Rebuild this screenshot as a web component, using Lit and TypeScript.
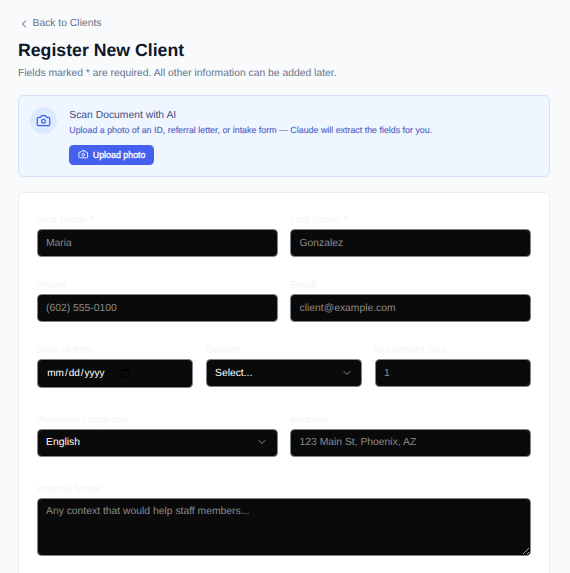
import { LitElement, html, css, svg } from "lit";
import { customElement } from "lit/decorators.js";

const camera = (size: number) => html`<svg width=${size} height=${size} viewBox="0 0 24 24" fill="none" stroke="currentColor" stroke-width="2" stroke-linecap="round" stroke-linejoin="round">${svg`<path d="M14.5 4h-5L7 7H4a2 2 0 0 0-2 2v9a2 2 0 0 0 2 2h16a2 2 0 0 0 2-2V9a2 2 0 0 0-2-2h-3l-2.5-3z"/><circle cx="12" cy="13" r="3"/>`}</svg>`;
const chevronDown = html`<svg class="chev" width="12" height="12" viewBox="0 0 24 24" fill="none" stroke="currentColor" stroke-width="2" stroke-linecap="round" stroke-linejoin="round">${svg`<path d="m6 9 6 6 6-6"/>`}</svg>`;

@customElement("app-root")
export class AppRoot extends LitElement {
  static styles = css`
    :host {
      display: block;
      height: 573px;
      overflow: hidden;
      background: #f8fafc;
      font-family: "Liberation Sans", Arial, sans-serif;
      text-rendering: geometricPrecision;
      box-sizing: border-box;
      padding: 15.5px 20px 0 18px;
    }
    * { box-sizing: border-box; }
    .back {
      display: flex;
      align-items: center;
      gap: 2.5px;
      font-size: 10.35px;
      line-height: 16px;
      color: #64748b;
    }
    .back svg { display: block; color: #475569; }
    h1 {
      margin: 6.5px 0 0;
      font-size: 17.7px;
      line-height: 24px;
      font-weight: 700;
      color: #0f172a;
    }
    .sub {
      margin: 3.5px 0 13.5px;
      font-size: 10.35px;
      line-height: 16px;
      color: #64748b;
    }
    .banner {
      display: flex;
      gap: 12px;
      padding: 11.25px;
      background: #eff6ff;
      border: 0.75px solid #d3e0f5;
      border-radius: 6px;
      margin-bottom: 15px;
    }
    .circle {
      flex: none;
      width: 27px;
      height: 27px;
      border-radius: 50%;
      background: #dbeafe;
      color: #4361ee;
      display: flex;
      align-items: center;
      justify-content: center;
    }
    .title {
      margin-top: 1px;
      font-size: 10.35px;
      line-height: 15.75px;
      color: #3f4b7f;
    }
    .desc {
      font-size: 8.87px;
      line-height: 13.5px;
      color: #5566c4;
      -webkit-text-stroke: 0.15px #5566c4;
    }
    .upload {
      margin-top: 7px;
      display: inline-flex;
      align-items: center;
      gap: 4px;
      height: 20.25px;
      padding: 0 9px;
      border: 0;
      border-radius: 4.5px;
      background: #4361ee;
      color: #fff;
      font: 400 8.87px "Liberation Sans", Arial, sans-serif;
      -webkit-text-stroke: 0.3px #fff;
    }
    .card {
      background: #fff;
      border: 0.75px solid #e8edf3;
      border-radius: 6px;
      padding: 18.5px 18px 18px 17.5px;
      height: 600px;
    }
    .row { display: grid; gap: 12.5px; margin-bottom: 23.5px; }
    .row.tight { margin-bottom: 19.25px; }
    .two { grid-template-columns: 1fr 1fr; }
    .three { grid-template-columns: 1fr 1fr 1fr; }
    .field { display: flex; flex-direction: column; min-width: 0; }
    label {
      font-size: 10.35px;
      line-height: 15.75px;
      margin-top: 1.5px;
      color: #f1f5f9;
    }
    input, select, textarea {
      display: block;
      width: 100%;
      height: 28.5px;
      margin: 0;
      padding: 0 8.5px;
      background: #0a0a0a;
      border: 0.75px solid #7f848c;
      border-radius: 4.5px;
      color: #fff;
      font: 10.35px "Liberation Sans", Arial, sans-serif;
      text-rendering: geometricPrecision;
      outline: none;
    }
    input[type="date"] {
      height: 29px;
      padding-left: 8.75px;
      font-size: 10px;
    }
    input[type="date"]::-webkit-calendar-picker-indicator {
      margin-right: 52px;
    }
    ::placeholder { color: #8a8a8a; opacity: 1; }
    select { appearance: none; }
    textarea { height: 58px; padding-top: 7.5px; resize: vertical; }
    .select-wrap { position: relative; }
    .chev {
      position: absolute;
      right: 9.5px;
      top: 7.75px;
      color: #8a8a8a;
      pointer-events: none;
    }
  `;

  render() {
    return html`
      <div class="back">
        <svg width="12" height="12" viewBox="0 0 24 24" fill="none" stroke="currentColor" stroke-width="2" stroke-linecap="round" stroke-linejoin="round"><path d="m15 18-6-6 6-6"/></svg>
        <span>Back to Clients</span>
      </div>
      <h1>Register New Client</h1>
      <p class="sub">Fields marked * are required. All other information can be added later.</p>
      <section class="banner">
        <div class="circle">${camera(15)}</div>
        <div>
          <div class="title">Scan Document with AI</div>
          <div class="desc">Upload a photo of an ID, referral letter, or intake form — Claude will extract the fields for you.</div>
          <button class="upload">${camera(10.5)}Upload photo</button>
        </div>
      </section>
      <section class="card">
        <div class="row two tight">
          <div class="field"><label>First Name *</label><input placeholder="Maria" /></div>
          <div class="field"><label>Last Name *</label><input placeholder="Gonzalez" /></div>
        </div>
        <div class="row two tight">
          <div class="field"><label>Phone</label><input placeholder="(602) 555-0100" /></div>
          <div class="field"><label>Email</label><input placeholder="client@example.com" /></div>
        </div>
        <div class="row three">
          <div class="field"><label>Date of Birth</label><input type="date" /></div>
          <div class="field"><label>Gender</label>
            <div class="select-wrap"><select><option>Select...</option></select>${chevronDown}</div>
          </div>
          <div class="field"><label>Household Size</label><input type="number" placeholder="1" /></div>
        </div>
        <div class="row two">
          <div class="field"><label>Preferred Language</label>
            <div class="select-wrap"><select><option>English</option></select>${chevronDown}</div>
          </div>
          <div class="field"><label>Address</label><input placeholder="123 Main St, Phoenix, AZ" /></div>
        </div>
        <div class="field"><label>Internal Notes</label><textarea placeholder="Any context that would help staff members..."></textarea></div>
      </section>
    `;
  }
}
